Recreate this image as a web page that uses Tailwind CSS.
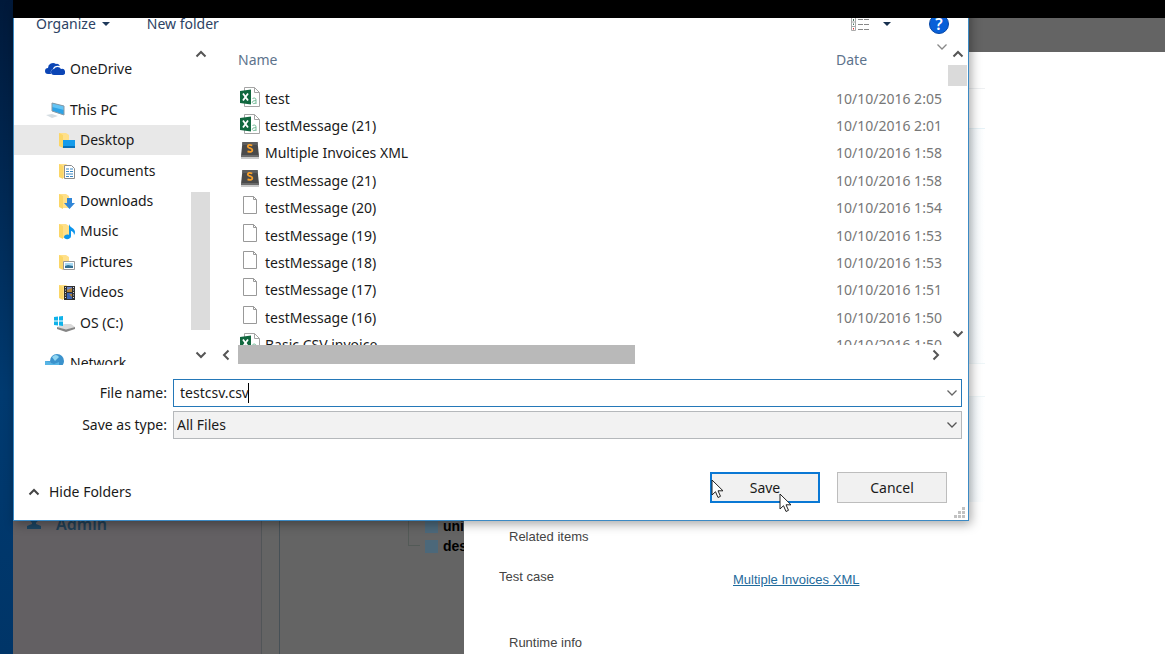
<!DOCTYPE html>
<html lang="en">
<head>
<meta charset="utf-8">
<title>Save As</title>
<script src="https://cdn.jsdelivr.net/npm/@tailwindcss/browser@4"></script>
</head>
<body class="relative h-screen overflow-hidden bg-black font-['Noto_Sans','Open_Sans',sans-serif] text-sm text-[#1a1a1a]">

<svg class="hidden" aria-hidden="true">
  <symbol id="folder" viewBox="0 0 18 18"><path d="M1 2h7l3 2v12H4L1 14z" fill="#ffe08a"/><path d="M1 2l4 2v13l-4-2z" fill="#fbd667"/></symbol>
  <symbol id="excel" viewBox="0 0 20 20"><path d="M4.500.5h10l5 5v14h-15z" fill="#fff" stroke="#a5a5a5"/><path d="M14.500.5v5h5" fill="none" stroke="#a5a5a5"/><path d="M0 4l11-1.500v15L0 16z" fill="#11683f"/><path d="M3 6.500l5 7M8 6.500l-5 7" stroke="#fff" stroke-width="1.800"/><path d="M12.500 11.500q3.500-1.500 3.500 1.500v4M16 13.500q-4 0-3.700 2t3.700.5" fill="none" stroke="#79bd9b"/></symbol>
  <symbol id="sublime" viewBox="0 0 20 20"><path d="M2.500 1h15l1.500 14H1z" fill="#4a4a4a"/><path d="M2.500 1h15l.3 3H2.200z" fill="#5d5d5d"/><path d="M1 14h18v2H1z" fill="#6a6a6a"/><path d="M1 16h18v2H1z" fill="#c9c9c9"/><path d="M12.300 4.500Q8 3 7.800 5.400c0 2.100 4.600 1.500 4.600 3.700 0 2-2.300 2.100-4.900 1.300" fill="none" stroke="#f9a02b" stroke-width="1.800"/></symbol>
  <symbol id="page" viewBox="0 0 20 20"><path d="M3.500.5h10l3 3v14h-13z" fill="#fff" stroke="#999"/><path d="M13.500.5v3h3" fill="none" stroke="#999"/></symbol>
  <symbol id="down" viewBox="0 0 12 12"><path d="M1.500 3.500L6 8l4.500-4.500" fill="none" stroke="currentColor" stroke-width="1.300"/></symbol>
  <symbol id="arrow" viewBox="0 0 12 12"><path d="M1.500 8.500L6 4l4.500 4.500" fill="none" stroke="currentColor" stroke-width="2"/></symbol>
  <symbol id="pointer" viewBox="0 0 14 20"><path d="M1 1v15l3.500-3.300L7 18.500l2.500-1.200L7 11.800h5z" fill="#fff" stroke="#222"/></symbol>
</svg>

<!-- Desktop edge and dimmed web page -->
<div class="flex h-screen">
  <div class="w-[13px] shrink-0 bg-linear-to-b from-[#00193a] via-[#003a70] via-60% to-[#003568]"></div>
  <div class="flex min-w-0 flex-1 flex-col bg-[#646464]">
    <div class="h-[52px] shrink-0"></div>
    <div class="flex min-h-0 flex-1 font-['Liberation_Sans',sans-serif]">
      <aside class="w-[249px] shrink-0 border-r border-[#515558] bg-[#636063] pt-[462px]">
        <div class="flex items-center gap-[14px] pl-[13px] font-['Noto_Sans',sans-serif] text-base leading-5 font-semibold text-[#213f55]">
          <svg class="size-4" viewBox="0 0 16 16"><circle cx="8" cy="3" r="4" fill="#1c4562"/><path d="M1 13v-3l5-2V6h4v2l5 2v3z" fill="#1c4562"/></svg>
          <span>Admin</span>
        </div>
      </aside>
      <div class="w-[18px] shrink-0 border-r border-[#465056]"></div>
      <div class="w-[184px] shrink-0 overflow-hidden pt-[464px] pl-[128px] text-sm leading-5 font-bold text-black">
        <div class="flex items-center"><span class="h-5 w-3 shrink-0 border-l border-[#535a57]"></span><span class="ml-[5px] size-[13px] shrink-0 bg-[#4c687a]"></span><span class="ml-[5px]">uni</span></div>
        <div class="flex items-center"><span class="mb-[10px] h-[10px] w-3 shrink-0 border-b border-l border-[#535a57]"></span><span class="ml-[5px] size-[13px] shrink-0 bg-[#4c687a]"></span><span class="ml-[5px]">des</span></div>
      </div>
      <main class="min-w-0 flex-1 bg-white text-[13px] leading-5 text-[#444]">
        <div class="mr-[180px] h-[37px] border-b border-[#eef0f2]"></div>
        <div class="mr-[180px] h-[40px] border-b border-[#e6f2f7]"></div>
        <div class="mr-[180px] h-[234px] bg-linear-to-l from-white to-[#f1f8fc] to-3%"></div>
        <div class="mr-[180px] h-[34px] border-y border-[#eef6f8]"></div>
        <div class="mr-[180px] h-[105px] bg-linear-to-l from-white to-[#f1f8fc] to-3%"></div>
        <div class="pt-[25px] pl-[45px]">Related items</div>
        <div class="mt-5 flex pl-[35px]"><span class="w-[234px]">Test case</span><a href="#" class="pt-[3px] text-[#1f6b9c] underline">Multiple Invoices XML</a></div>
        <div class="mt-[43px] pl-[45px]">Runtime info</div>
      </main>
    </div>
  </div>
</div>

<!-- Save dialog -->
<form class="absolute top-1 right-[196px] left-[13px] border border-[#3c8ac4] bg-white shadow-[2px_3px_10px_rgba(0,0,0,0.35)]" onsubmit="return false">
  <div class="flex h-[39px] items-center pr-[19px] pb-[2px] pl-[22px] text-[#2c4264]">
    <button type="button" class="flex items-center gap-[6px]">Organize <svg class="h-1 w-2" viewBox="0 0 8 4"><path d="M0 0h8L4 4z" fill="#1e395b"/></svg></button>
    <button type="button" class="ml-[37px]">New folder</button>
    <button type="button" class="ml-auto flex items-center gap-[13px]" aria-label="Change view">
      <svg class="h-4 w-5" viewBox="0 0 20 16"><path d="M1.500 1.500h4v13h-4zM1.500 6h4M1.500 10.500h4" fill="#fff" stroke="#aaa"/><path d="M3 3h1v2H3zM3 7.500h1v1.500H3z" fill="#4c7560"/><path d="M3 12h1v1.500H3z" fill="#d33"/><path d="M8 8.500h5M14 8.500h5M8 13.500h5M14 13.500h5M8 3.500h5M14 3.500h5" stroke="#888"/></svg>
      <svg class="h-1 w-2" viewBox="0 0 8 4"><path d="M0 0h8L4 4z" fill="#17304f"/></svg>
    </button>
    <button type="button" class="ml-[38px] size-5 rounded-full border border-[#0648a8] bg-[#0860d8] text-center text-base leading-[18px] font-semibold text-white" aria-label="Help">?</button>
  </div>

  <div class="flex h-[321px] overflow-hidden">
    <nav class="w-[176px] shrink-0 pt-[10px]">
      <a href="#" class="flex h-[30px] items-center gap-[5px] pl-[31px]"><svg class="size-5" viewBox="0 0 20 20"><path d="M6 15H3a3 3 0 010-6 5 5 0 018-4q2-1 4 2-6-1-7 3-3 1-2 5z" fill="#0b45b5"/><path d="M9 16a3 3 0 010-6 4 4 0 017 0 3 3 0 012 6z" fill="#0b45b5"/></svg>OneDrive</a>
      <a href="#" class="mt-[11px] flex h-[30px] items-center gap-[5px] pl-[31px]"><svg class="size-5" viewBox="0 0 20 20"><path d="M7 3l12 3v9L7 11z" fill="#2ea3e6"/><path d="M7 3l12 3v4L7 7z" fill="#63c4f5"/><path d="M7 3l12 3v9L7 11z" fill="none" stroke="#8899a5"/><path d="M1 15l6-1 6 2-6 2z" fill="#d5dde2"/></svg>This PC</a>
      <div class="grid h-[213px] auto-rows-fr">
        <a href="#" class="flex items-center gap-1 bg-[#e8e8e8] pl-[44px]"><svg class="size-[18px]" viewBox="0 0 18 18"><use href="#folder"/><path d="M5 9h12v7H5z" fill="#159bea"/><path d="M5 15h12v2H5z" fill="#0870b8"/></svg>Desktop</a>
        <a href="#" class="flex items-center gap-1 pl-[44px]"><svg class="size-[18px]" viewBox="0 0 18 18"><use href="#folder"/><path d="M6.500 3.500h7l3 3v10h-10z" fill="#fff" stroke="#8b8b8b"/><path d="M8 7h3M12 7h3M8 9.500h3M12 9.500h3M8 12h7M8 14.500h3M12 14.500h3" stroke="#3a87c2"/></svg>Documents</a>
        <a href="#" class="flex items-center gap-1 pl-[44px]"><svg class="size-[18px]" viewBox="0 0 18 18"><use href="#folder"/><path d="M9 6h5v5h3l-5.500 6L6 11h3z" fill="#3186d7"/></svg>Downloads</a>
        <a href="#" class="flex items-center gap-1 pl-[44px]"><svg class="size-[18px]" viewBox="0 0 18 18"><use href="#folder"/><path d="M11 2c1 4 6 4 6 8q0 2-1 3c0-3-2-4-3-4v5c0 4-7 4-7 1 0-2 3-3 5-2z" fill="#0b95ed"/></svg>Music</a>
        <a href="#" class="flex items-center gap-1 pl-[44px]"><svg class="size-[18px]" viewBox="0 0 18 18"><use href="#folder"/><path d="M5.500 8.500h11v8h-11z" fill="#fff" stroke="#999"/><path d="M7 10h8v5H7z" fill="#a9daf4"/><path d="M7 13l3-1 5 1v2H7z" fill="#336f91"/></svg>Pictures</a>
        <a href="#" class="flex items-center gap-1 pl-[44px]"><svg class="size-[18px]" viewBox="0 0 18 18"><use href="#folder"/><path d="M6 3h11v14H6z" fill="#303030"/><path d="M9 4h5v5H9z" fill="#6d86c7"/><path d="M9 10h5v6H9z" fill="#3c65b5"/><path d="M9 7l5-2v4H9zM11 11h3v3z" fill="#b38439"/><path d="M7.500 4v12M15.500 4v12" stroke="#ddd" stroke-dasharray="1 1.500"/></svg>Videos</a>
        <a href="#" class="flex items-center gap-1 pl-[40px]"><svg class="h-[18px] w-[22px]" viewBox="0 0 22 18"><path d="M3 13l7-3h7l4 3-9 3z" fill="#dadada"/><path d="M3 13l9 2.500 9-2.500v2l-9 3-9-3z" fill="#858585"/><path d="M0 3l4-.5v4H0zM5 2.400l4-.4v4.500H5zM0 7.500h4v4L0 11zM5 7.500h4V12l-4-.4z" fill="#10b2e9"/></svg>OS (C:)</a>
      </div>
      <a href="#" class="mt-[10px] flex h-[30px] items-center gap-[5px] pl-[31px]"><svg class="size-5" viewBox="0 0 20 20"><path d="M0 8h5v9H0z" fill="#4aa7dd"/><circle cx="12" cy="8" r="7" fill="#3b92cc"/><path d="M7 4q4-4 7 0l-4 4z" fill="#90d6f2"/><path d="M0 8l9 3 5-2v8H0z" fill="#58b5e5"/></svg>Network</a>
    </nav>
    <div class="flex w-5 shrink-0 flex-col items-center text-[#555]">
      <svg class="mt-1 ml-px size-3"><use href="#arrow"/></svg>
      <div class="mt-[132px] ml-px h-[138px] w-[19px] bg-[#dcdcdc]"></div>
      <svg class="mt-[19px] ml-px size-3 rotate-180"><use href="#arrow"/></svg>
    </div>
    <div class="flex min-w-0 flex-1 flex-col">
      <div class="flex h-[301px]">
        <div class="min-w-0 flex-1 overflow-hidden pl-[28px]">
          <table class="h-[315px] w-full table-fixed border-collapse text-left leading-5">
            <thead><tr class="h-[41px] text-[#5d738c]"><th class="p-0 pb-[9px] font-normal">Name</th><th class="w-[112px] p-0 pb-[9px] font-normal">Date</th></tr></thead>
            <tbody>
              <tr><td class="p-0"><span class="flex items-center gap-[5px] pl-[2px]"><svg class="mb-1 size-5"><use href="#excel"/></svg>test</span></td><td class="p-0 text-[#777]">10/10/2016 2:05</td></tr>
              <tr><td class="p-0"><span class="flex items-center gap-[5px] pl-[2px]"><svg class="mb-1 size-5"><use href="#excel"/></svg>testMessage (21)</span></td><td class="p-0 text-[#777]">10/10/2016 2:01</td></tr>
              <tr><td class="p-0"><span class="flex items-center gap-[5px] pl-[2px]"><svg class="mb-1 size-5"><use href="#sublime"/></svg>Multiple Invoices XML</span></td><td class="p-0 text-[#777]">10/10/2016 1:58</td></tr>
              <tr><td class="p-0"><span class="flex items-center gap-[5px] pl-[2px]"><svg class="mb-1 size-5"><use href="#sublime"/></svg>testMessage (21)</span></td><td class="p-0 text-[#777]">10/10/2016 1:58</td></tr>
              <tr><td class="p-0"><span class="flex items-center gap-[5px] pl-[2px]"><svg class="mb-1 size-5"><use href="#page"/></svg>testMessage (20)</span></td><td class="p-0 text-[#777]">10/10/2016 1:54</td></tr>
              <tr><td class="p-0"><span class="flex items-center gap-[5px] pl-[2px]"><svg class="mb-1 size-5"><use href="#page"/></svg>testMessage (19)</span></td><td class="p-0 text-[#777]">10/10/2016 1:53</td></tr>
              <tr><td class="p-0"><span class="flex items-center gap-[5px] pl-[2px]"><svg class="mb-1 size-5"><use href="#page"/></svg>testMessage (18)</span></td><td class="p-0 text-[#777]">10/10/2016 1:53</td></tr>
              <tr><td class="p-0"><span class="flex items-center gap-[5px] pl-[2px]"><svg class="mb-1 size-5"><use href="#page"/></svg>testMessage (17)</span></td><td class="p-0 text-[#777]">10/10/2016 1:51</td></tr>
              <tr><td class="p-0"><span class="flex items-center gap-[5px] pl-[2px]"><svg class="mb-1 size-5"><use href="#page"/></svg>testMessage (16)</span></td><td class="p-0 text-[#777]">10/10/2016 1:50</td></tr>
              <tr><td class="p-0"><span class="flex items-center gap-[5px] pl-[2px]"><svg class="mb-1 size-5"><use href="#excel"/></svg>Basic CSV invoice</span></td><td class="p-0 text-[#777]">10/10/2016 1:50</td></tr>
            </tbody>
          </table>
        </div>
        <div class="relative flex w-5 shrink-0 flex-col items-center text-[#555]">
          <svg class="absolute -top-[3px] -left-3 size-3 text-[#888]"><use href="#down"/></svg>
          <svg class="mt-1 mr-px size-3"><use href="#arrow"/></svg>
          <div class="mt-[5px] mr-px h-[21px] w-[19px] bg-[#dadada]"></div>
          <svg class="mt-auto mr-px mb-[5px] size-3 rotate-180"><use href="#arrow"/></svg>
        </div>
      </div>
      <div class="flex h-5 items-start pr-[26px] pl-[10px] text-[#555]">
        <svg class="mt-1 size-3 -rotate-90"><use href="#arrow"/></svg>
        <div class="ml-[6px] flex-1"><div class="h-[19px] w-[57.4%] bg-[#b9b9b9]"></div></div>
        <svg class="mt-1 size-3 rotate-90"><use href="#arrow"/></svg>
      </div>
    </div>
  </div>

  <div class="mt-[14px] grid grid-cols-[153px_1fr] items-center gap-x-[6px] gap-y-1 pr-[6px]">
    <label for="filename" class="text-right">File name:</label>
    <div class="relative">
      <input id="filename" type="text" value="testcsv.csv" class="block h-7 w-full border border-[#2478b8] bg-white px-[6px] pb-[2px] outline-none">
      <span class="absolute top-1 left-[75px] h-5 w-px bg-black"></span>
      <svg class="absolute top-2 right-1 size-3 text-[#666]"><use href="#down"/></svg>
    </div>
    <label for="filetype" class="text-right">Save as type:</label>
    <div class="relative">
      <select id="filetype" class="block h-7 w-full appearance-none border border-[#b5b8bb] bg-[#f2f2f2] px-[3px]"><option>All Files</option></select>
      <svg class="absolute top-2 right-1 size-3 text-[#555]"><use href="#down"/></svg>
    </div>
  </div>

  <div class="relative mt-[33px] flex h-12 items-start pr-[21px] pl-[14px]">
    <button type="button" class="mt-[10px] flex items-center gap-[9px] leading-5"><svg class="size-3 text-[#444]"><use href="#arrow"/></svg>Hide Folders</button>
    <button type="submit" class="ml-auto h-[31px] w-[110px] border-2 border-[#0a78d4] bg-[#f1f1f1]">Save</button>
    <button type="button" class="ml-[17px] h-[31px] w-[110px] border border-[#bdbdbd] bg-[#f1f1f1]">Cancel</button>
    <svg class="absolute right-[3px] bottom-[2px] size-[11px]" viewBox="0 0 11 11"><path d="M8 0h3v3H8zM4 4h3v3H4zM8 4h3v3H8zM0 8h3v3H0zM4 8h3v3H4zM8 8h3v3H8z" fill="#c2c2c2"/></svg>
  </div>
</form>

<div class="absolute top-0 right-0 left-[13px] h-[18px] bg-black"></div>
<svg class="absolute top-[479px] left-[711px] h-5 w-[14px]"><use href="#pointer"/></svg>
<svg class="absolute top-[493px] left-[779px] h-5 w-[14px]"><use href="#pointer"/></svg>
</body>
</html>
